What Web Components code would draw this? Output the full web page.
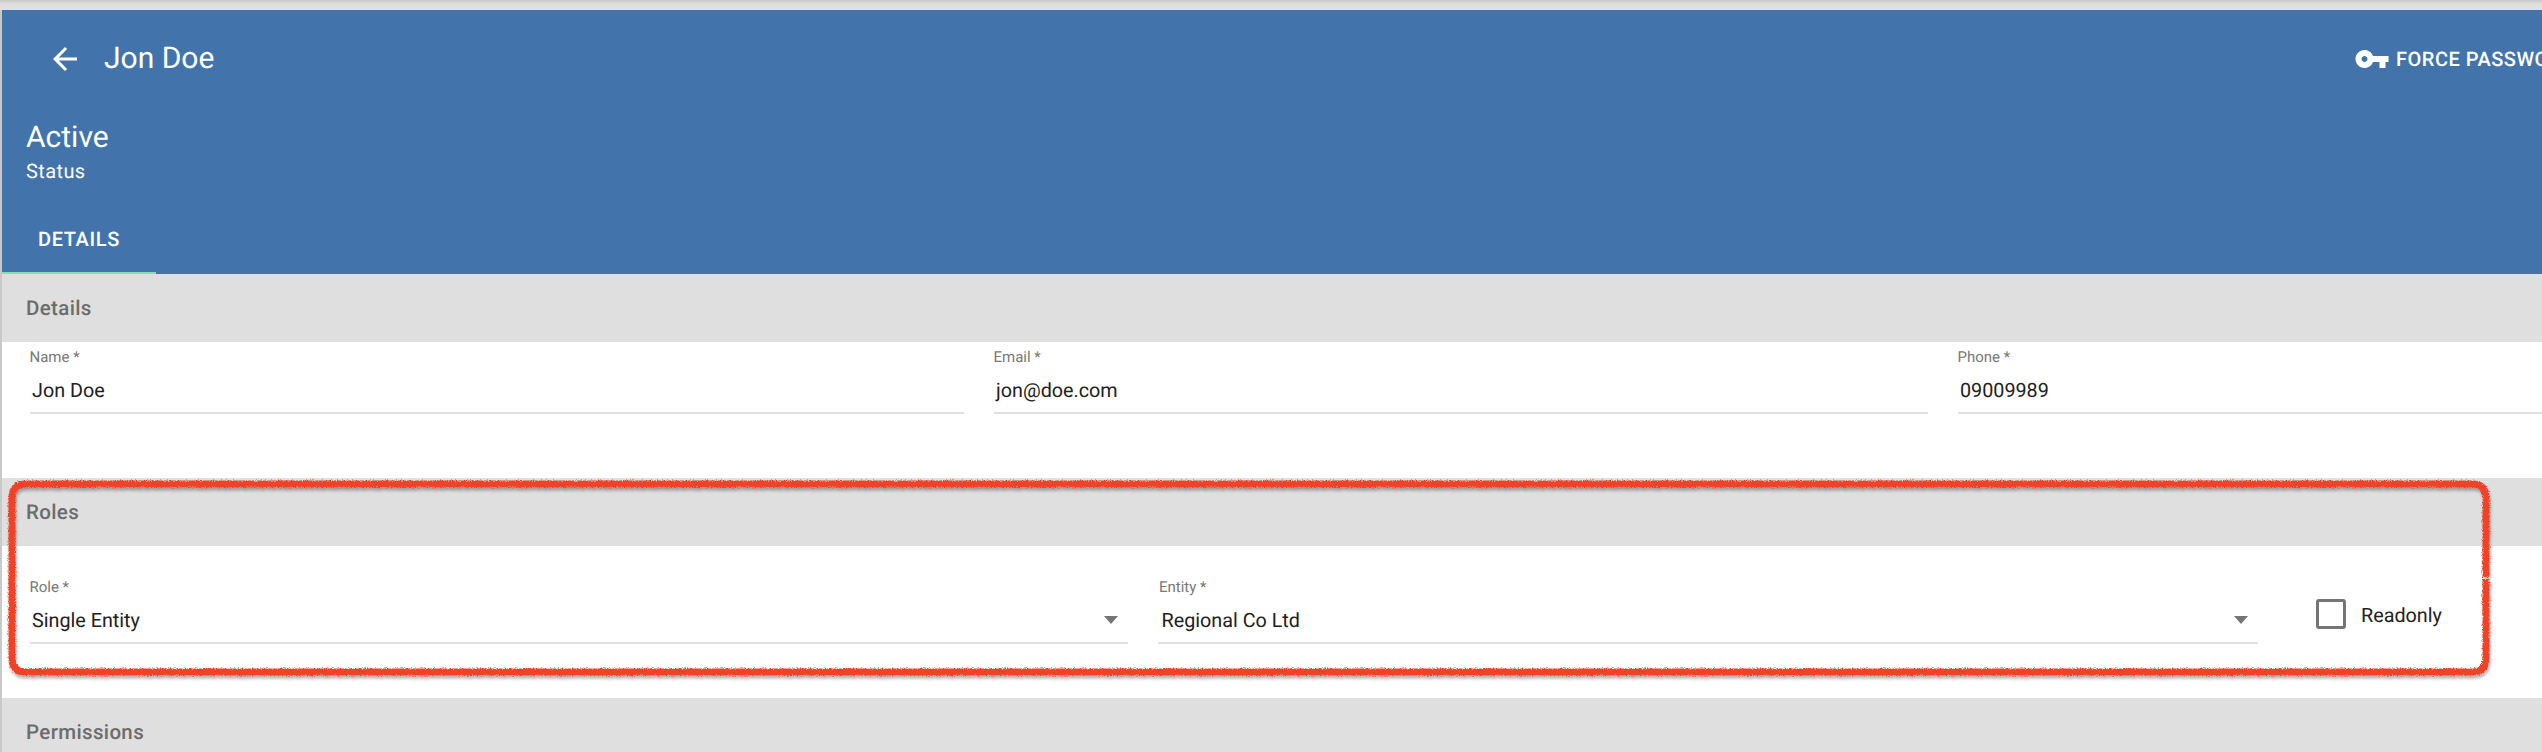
<!DOCTYPE html>
<html lang="en">
<head>
<meta charset="utf-8">
<title>Jon Doe</title>
<style>
  html, body { margin: 0; height: 100%; overflow: hidden; background: #fff; }
  body { font-family: Roboto, "Liberation Sans", sans-serif; text-rendering: geometricPrecision; }
</style>
</head>
<body>
<user-page>
  <user-header slot="header" name="Jon Doe" status="Active" status-label="Status" action="FORCE PASSWORD" tab="DETAILS"></user-header>

  <form-section title="Details" top="6" bottom="64" columns="934px 934px 934px">
    <text-field label="Name *" value="Jon Doe"></text-field>
    <text-field label="Email *" value="jon@doe.com"></text-field>
    <text-field label="Phone *" value="09009989"></text-field>
  </form-section>

  <form-section title="Roles" top="32" bottom="54" columns="1098px 1100px 200px" gap="30">
    <text-field label="Role *" value="Single Entity" select></text-field>
    <text-field label="Entity *" value="Regional Co Ltd" select style="--inset: 1.5px"></text-field>
    <check-field label="Readonly"></check-field>
  </form-section>

  <form-section title="Permissions" top="0" bottom="0" columns="1fr"></form-section>

  <annotation-ring slot="overlay"></annotation-ring>
</user-page>

<script>
  class UserPage extends HTMLElement {
    constructor() {
      super();
      this.attachShadow({ mode: "open" });
      this.shadowRoot.innerHTML = `
        <style>
          :host {
            display: block;
            position: relative;
            width: 2922px;
            height: 752px;
            box-sizing: border-box;
            padding-top: 10px;
            background: linear-gradient(#c9c9c9, #dfdfdf 4px, #e1e1e1 10px, #c9c9c9 10px);
          }
          .content {
            margin-left: 2px;
            display: flex;
            flex-direction: column;
            background: #fff;
          }
        </style>
        <div class="content">
          <slot name="header"></slot>
          <slot></slot>
        </div>
        <slot name="overlay"></slot>
      `;
    }
  }

  class UserHeader extends HTMLElement {
    constructor() {
      super();
      this.attachShadow({ mode: "open" });
      this.shadowRoot.innerHTML = `
        <style>
          :host {
            display: block;
            height: 264px;
            background: #4274ab;
            color: #fff;
          }
          .title-row {
            display: flex;
            align-items: center;
            height: 98px;
            padding-left: 45px;
          }
          .back { width: 36px; height: 36px; fill: #fff; flex: none; }
          h1 {
            margin: 0 0 0 21px;
            font: 400 30px/36px Roboto, sans-serif;
          }
          .action {
            margin-left: auto;
            width: 568px;
            flex: none;
            display: flex;
            align-items: center;
            gap: 6px;
            font: 500 20px/24px Roboto, sans-serif;
            letter-spacing: 0.5px;
            white-space: nowrap;
          }
          .action svg { width: 36px; height: 36px; fill: #fff; flex: none; }
          .status { padding: 12px 0 0 24px; }
          .value { font: 400 30px/36px Roboto, sans-serif; }
          .label { margin-top: 3px; font: 400 20px/24px Roboto, sans-serif; letter-spacing: 0.4px; }
          .tabs { display: flex; margin-top: 21px; }
          .tab {
            box-sizing: border-box;
            width: 154px;
            height: 70px;
            padding: 2px 0 0 36px;
            display: flex;
            align-items: center;
            border-bottom: 2px solid #7de3b4;
            font: 500 20px/24px Roboto, sans-serif;
            letter-spacing: 0.6px;
          }
        </style>
        <div class="title-row">
          <svg class="back" viewBox="0 0 24 24"><path d="M20 11H7.83l5.59-5.59L12 4l-8 8 8 8 1.41-1.41L7.83 13H20v-2z"/></svg>
          <h1>${this.getAttribute("name")}</h1>
          <div class="action">
            <svg viewBox="0 0 24 24"><path d="M12.65 10C11.83 7.67 9.61 6 7 6c-3.31 0-6 2.69-6 6s2.69 6 6 6c2.61 0 4.83-1.67 5.65-4H17v4h4v-4h2v-4H12.65zM7 14c-1.1 0-2-.9-2-2s.9-2 2-2 2 .9 2 2-.9 2-2 2z"/></svg>
            <span>${this.getAttribute("action")}</span>
          </div>
        </div>
        <div class="status">
          <div class="value">${this.getAttribute("status")}</div>
          <div class="label">${this.getAttribute("status-label")}</div>
        </div>
        <div class="tabs"><div class="tab">${this.getAttribute("tab")}</div></div>
      `;
    }
  }

  class FormSection extends HTMLElement {
    constructor() {
      super();
      this.attachShadow({ mode: "open" });
      const top = this.getAttribute("top");
      const bottom = this.getAttribute("bottom");
      const gap = this.getAttribute("gap") || 30;
      this.shadowRoot.innerHTML = `
        <style>
          :host { display: block; }
          h2 {
            margin: 0;
            box-sizing: border-box;
            height: 68px;
            padding: 1px 0 0 24px;
            display: flex;
            align-items: center;
            background: #dfdfdf;
            color: #6c6c6c;
            font: 500 20.5px/24px Roboto, sans-serif;
            letter-spacing: 0.35px;
          }
          .body {
            display: grid;
            grid-template-columns: ${this.getAttribute("columns")};
            column-gap: ${gap}px;
            padding: ${top}px 0 ${bottom}px 28px;
          }
        </style>
        <h2>${this.getAttribute("title")}</h2>
        <div class="body"><slot></slot></div>
      `;
    }
  }

  class TextField extends HTMLElement {
    constructor() {
      super();
      this.attachShadow({ mode: "open" });
      const arrow = this.hasAttribute("select") ? `<span class="arrow"></span>` : "";
      this.shadowRoot.innerHTML = `
        <style>
          :host { display: block; }
          label {
            display: block;
            margin-left: -0.5px;
            padding-left: var(--inset, 0);
            color: #787878;
            font: 400 15px/18px Roboto, sans-serif;
          }
          .input {
            display: flex;
            align-items: center;
            justify-content: space-between;
            height: 46px;
            padding: 0 10px 0 calc(2px + var(--inset, 0px));
            border-bottom: 2px solid #e0e0e0;
            color: #212121;
            font: 400 19.75px/24px Roboto, sans-serif;
          }
          .input span:first-child { padding-top: 4px; }
          .arrow {
            width: 0;
            height: 0;
            margin-top: 1px;
            border-left: 7.5px solid transparent;
            border-right: 7.5px solid transparent;
            border-top: 8px solid #757575;
          }
        </style>
        <label>${this.getAttribute("label")}</label>
        <div class="input"><span>${this.getAttribute("value")}</span>${arrow}</div>
      `;
    }
  }

  class CheckField extends HTMLElement {
    constructor() {
      super();
      this.attachShadow({ mode: "open" });
      this.shadowRoot.innerHTML = `
        <style>
          :host {
            display: flex;
            align-items: center;
            gap: 15px;
            height: 30px;
            margin: 21px 0 0 28px;
            color: #212121;
            font: 400 19.75px/24px Roboto, sans-serif;
          }
          .box {
            box-sizing: border-box;
            width: 30px;
            height: 30px;
            border: 3px solid #757575;
            border-radius: 3px;
            flex: none;
          }
          .text { padding-top: 3px; }
        </style>
        <span class="box"></span>
        <span class="text">${this.getAttribute("label")}</span>
      `;
    }
  }

  // hand-drawn red ring around the roles section, it sits over the form
  class AnnotationRing extends HTMLElement {
    constructor() {
      super();
      this.attachShadow({ mode: "open" });
      this.shadowRoot.innerHTML = `
        <style>
          :host { position: absolute; left: 0; top: 0; width: 2542px; height: 752px; pointer-events: none; }
          svg { display: block; }
        </style>
        <svg width="2542" height="752" viewBox="0 0 2542 752">
          <defs>
            <filter id="rough" filterUnits="userSpaceOnUse" x="0" y="460" width="2542" height="240">
              <feTurbulence type="fractalNoise" baseFrequency="0.8" numOctaves="2" seed="4" result="noise"/>
              <feDisplacementMap in="SourceGraphic" in2="noise" scale="4" xChannelSelector="R" yChannelSelector="G" result="ink"/>
              <feGaussianBlur in="ink" stdDeviation="1.6" result="blur"/>
              <feOffset in="blur" dx="1" dy="3" result="off"/>
              <feComponentTransfer in="off" result="shadow">
                <feFuncR type="linear" slope="0" intercept="0"/>
                <feFuncG type="linear" slope="0" intercept="0"/>
                <feFuncB type="linear" slope="0" intercept="0"/>
                <feFuncA type="linear" slope="0.3"/>
              </feComponentTransfer>
              <feMerge>
                <feMergeNode in="shadow"/>
                <feMergeNode in="ink"/>
              </feMerge>
            </filter>
          </defs>
          <path filter="url(#rough)" fill="none" stroke="#f04225" stroke-width="7" stroke-linecap="butt"
            d="M2486 577 V498 Q2486 484 2472 484 H26 Q12 484 12 498 V658 Q12 672 26 672 H2472 Q2486 672 2486 658 V579"/>
        </svg>
      `;
    }
  }

  customElements.define("user-header", UserHeader);
  customElements.define("form-section", FormSection);
  customElements.define("text-field", TextField);
  customElements.define("check-field", CheckField);
  customElements.define("annotation-ring", AnnotationRing);
  customElements.define("user-page", UserPage);
</script>
</body>
</html>
